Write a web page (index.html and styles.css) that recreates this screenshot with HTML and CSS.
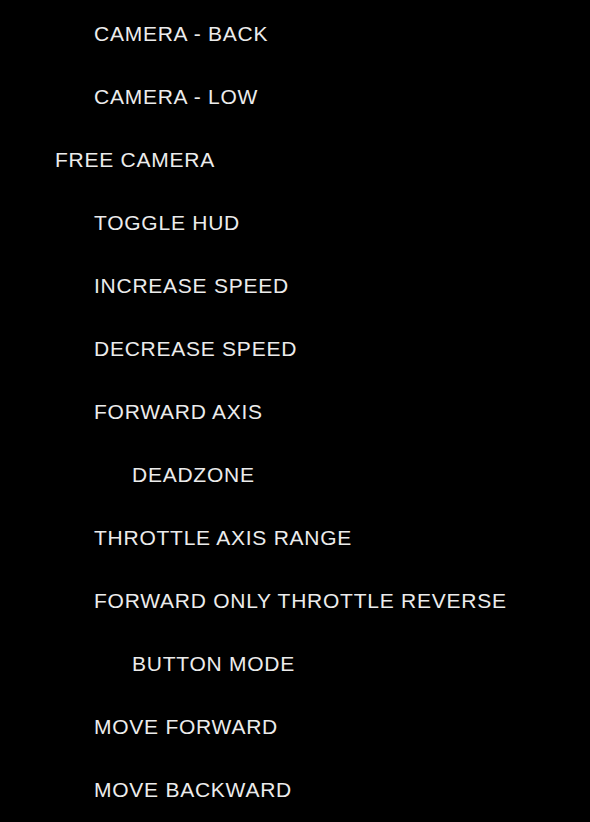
FILE: index.html
```html
<!DOCTYPE html>
<html>
<head>
<meta charset="utf-8">
<link rel="stylesheet" href="styles.css">
</head>
<body>
<ul class="menu">
  <li class="item l1">CAMERA - BACK</li>
  <li class="item l1">CAMERA - LOW</li>
  <li class="item l0">FREE CAMERA</li>
  <li class="item l1">TOGGLE HUD</li>
  <li class="item l1">INCREASE SPEED</li>
  <li class="item l1">DECREASE SPEED</li>
  <li class="item l1">FORWARD AXIS</li>
  <li class="item l2">DEADZONE</li>
  <li class="item l1">THROTTLE AXIS RANGE</li>
  <li class="item l1">FORWARD ONLY THROTTLE REVERSE</li>
  <li class="item l2">BUTTON MODE</li>
  <li class="item l1">MOVE FORWARD</li>
  <li class="item l1">MOVE BACKWARD</li>
</ul>
</body>
</html>
```
FILE: styles.css
```css
html, body {
  margin: 0;
  padding: 0;
  background: #000;
  height: 100%;
  overflow: hidden;
}
.menu {
  list-style: none;
  margin: 0;
  padding: 2px 0 0 55px;
  font-family: "Liberation Sans", Arial, sans-serif;
  font-size: 21px;
  letter-spacing: 0.75px;
  color: #ececec;
}
.item {
  height: 63px;
  line-height: 63px;
  white-space: nowrap;
}
.l1 { padding-left: 39px; }
.l2 { padding-left: 77px; }
```
